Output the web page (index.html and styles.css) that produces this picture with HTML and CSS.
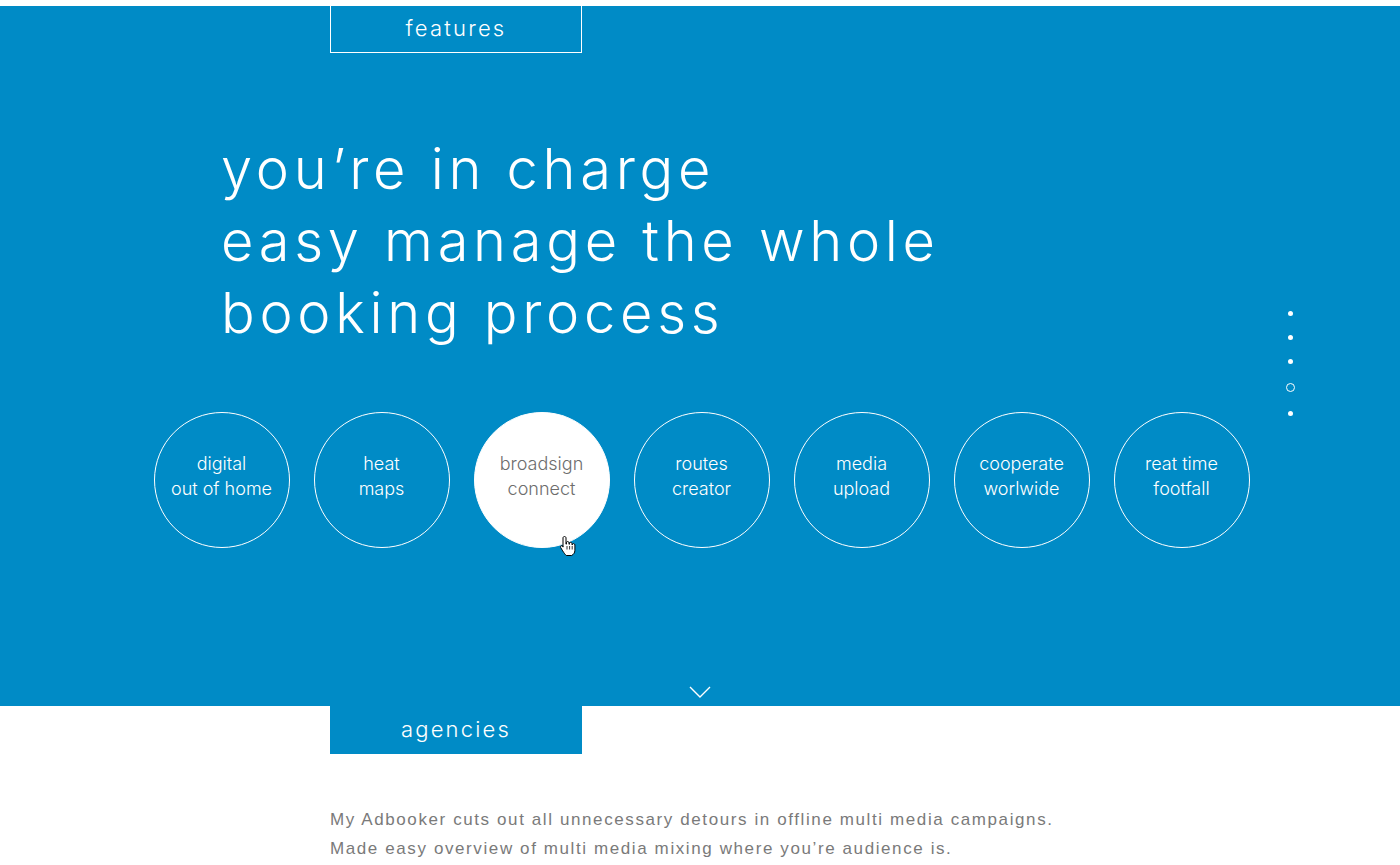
FILE: index.html
```html
<!DOCTYPE html>
<html>
<head>
    <title>My Adbooker - features</title>
    <link rel="stylesheet" href="styles.css">
</head>

<body>

    <!-- features -->
    <section class="hero">
        <div class="tab tab-outline">features</div>

        <h1 class="headline">
            you’re in charge<br>
            easy manage the whole<br>
            booking process
        </h1>

        <div class="bubbles">
            <div class="bubble">digital<br>out of home</div>
            <div class="bubble">heat<br>maps</div>
            <div class="bubble active">broadsign<br>connect
                <svg class="cursor" width="18" height="22" viewBox="0 0 18 22">
                    <path d="M5.5 1.5c.9 0 1.5.6 1.5 1.5v6.2l.4-.1V7.8c0-.8.6-1.3 1.3-1.3s1.3.6 1.3 1.3v1.5l.4-.1V8.6c0-.8.6-1.3 1.3-1.3s1.3.6 1.3 1.3v1.3l.3-.1c0-.7.6-1.2 1.3-1.2s1.3.6 1.3 1.3v5.4c0 2.6-1.6 4.2-3.2 5.2H7.3c-1-.9-2.3-2.5-3.6-4.6l-2-3.3c-.4-.7-.2-1.5.5-1.8.6-.3 1.2-.1 1.6.4L4 12.1V3c0-.9.6-1.5 1.5-1.5z" fill="#fff" stroke="#000" stroke-width="1"/>
                    <path d="M8 11v3.5M10.6 11v3.5M13.2 11v3.5" stroke="#000" stroke-width="0.8"/>
                </svg>
            </div>
            <div class="bubble">routes<br>creator</div>
            <div class="bubble">media<br>upload</div>
            <div class="bubble">cooperate<br>worlwide</div>
            <div class="bubble">reat time<br>footfall</div>
        </div>

        <div class="scroll-down">
            <svg width="22" height="13" viewBox="0 0 22 13">
                <polyline points="1,1 11,11 21,1" fill="none" stroke="#fff" stroke-width="1.4"/>
            </svg>
        </div>

        <!-- side navigation -->
        <ul class="side-dots">
            <li></li>
            <li></li>
            <li></li>
            <li class="current"></li>
            <li></li>
        </ul>
    </section>

    <!-- agencies -->
    <section class="agencies">
        <div class="tab tab-filled">agencies</div>
        <p class="intro">
            My Adbooker cuts out all unnecessary detours in offline multi media campaigns.<br>
            Made easy overview of multi media mixing where you’re audience is.
        </p>
    </section>

</body>
</html>
```

FILE: styles.css
```css
body {
    margin: 0;
    padding: 6px 0 0 0;
    background-color: #ffffff;
    font-family: "Inter", "Liberation Sans", Arial, sans-serif;
    overflow: hidden;
}

.hero {
    position: relative;
    height: 700px;
    background-color: #008bc6;
    display: flex;
    flex-direction: column;
}

.tab {
    width: 252px;
    height: 47px;
    box-sizing: border-box;
    margin-left: 330px;
    padding-bottom: 2px;
    display: flex;
    align-items: center;
    justify-content: center;
    color: #ffffff;
    font-size: 22px;
    font-weight: 300;
    letter-spacing: 2.2px;
}

.tab-outline {
    border: 1px solid #ffffff;
    border-top: none;
}

.tab-filled {
    height: 48px;
    background-color: #008bc6;
}

.headline {
    margin: 80px 0 0 221px;
    color: #ffffff;
    font-size: 56px;
    font-weight: 300;
    line-height: 72px;
    letter-spacing: 4.7px;
}

.bubbles {
    display: flex;
    justify-content: center;
    gap: 24px;
    margin-top: 63px;
    padding-left: 3px;
}

.bubble {
    position: relative;
    width: 136px;
    height: 136px;
    box-sizing: border-box;
    border: 1px solid #ffffff;
    border-radius: 50%;
    display: flex;
    align-items: center;
    justify-content: center;
    text-align: center;
    color: #ffffff;
    font-size: 18px;
    font-weight: 300;
    line-height: 25px;
    padding-bottom: 8px;
}

.bubble.active {
    background-color: #ffffff;
    color: #6d6d6d;
}

.cursor {
    position: absolute;
    left: 84px;
    top: 122px;
}

.scroll-down {
    margin-top: auto;
    display: flex;
    justify-content: center;
    padding-bottom: 7px;
}

.side-dots {
    position: absolute;
    right: 105px;
    top: 305px;
    margin: 0;
    padding: 0;
    list-style: none;
    display: flex;
    flex-direction: column;
    align-items: center;
    gap: 19px;
}

.side-dots li {
    width: 5px;
    height: 5px;
    border-radius: 50%;
    background-color: #ffffff;
}

.side-dots li.current {
    width: 9px;
    height: 9px;
    box-sizing: border-box;
    background-color: transparent;
    border: 1px solid #ffffff;
}

.intro {
    margin: 51px 0 0 330px;
    color: #7a7a7a;
    font-family: "Liberation Sans", Arial, sans-serif;
    font-size: 17px;
    line-height: 29px;
    letter-spacing: 1.6px;
}
```
